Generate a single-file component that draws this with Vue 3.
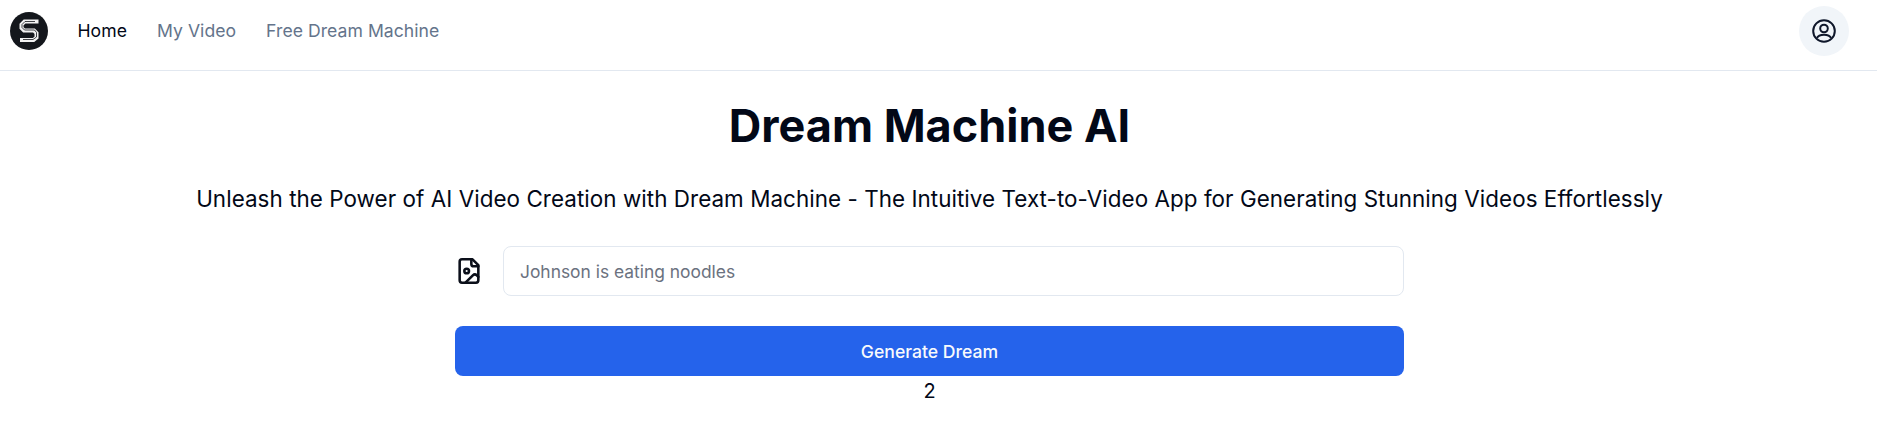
<script setup>
const links = [
  { label: 'Home', active: true },
  { label: 'My Video', active: false },
  { label: 'Free Dream Machine', active: false },
]
</script>

<template>
  <div class="page">
    <header class="topbar">
      <div class="left">
        <svg class="logo" viewBox="0 0 38 38" aria-label="logo">
          <circle cx="19" cy="19" r="19" fill="#14171c" />
          <path class="s-outer" d="M28.500 9.500H14.500L11.500 12.500V16L14 18.500H24L26.500 21V25.500L23.500 28H10" />
          <path class="s-inner" d="M25 9.500H15L12 12.500V15.500L14.500 18H24.500L26.500 20.500V25L23 27.500H13" />
        </svg>
        <nav class="nav">
          <a v-for="l in links" :key="l.label" class="link" :class="{ active: l.active }">{{ l.label }}</a>
        </nav>
      </div>
      <button class="avatar" aria-label="account">
        <svg viewBox="0 0 24 24" width="24" height="24" fill="none" stroke="#0f172a" stroke-width="2">
          <circle cx="12" cy="12" r="10.800" />
          <circle cx="12" cy="9.500" r="3.800" />
          <path d="M5 19c1-2.400 3.500-3.300 7-3.300s6 .9 7 3.300" />
        </svg>
      </button>
    </header>

    <main class="main">
      <h1 class="title">Dream Machine AI</h1>
      <p class="subtitle">Unleash the Power of AI Video Creation with Dream Machine - The Intuitive Text-to-Video App for Generating Stunning Videos Effortlessly</p>
      <div class="form">
        <div class="row">
          <svg class="file-icon" viewBox="0 0 24 24" width="28" height="28" fill="none" stroke="#0b0f1a" stroke-width="2.200" stroke-linejoin="round" stroke-linecap="round">
            <path d="M15 2H6a2 2 0 0 0-2 2v16a2 2 0 0 0 2 2h12a2 2 0 0 0 2-2V7Z" />
            <path d="M14 2v4a2 2 0 0 0 2 2h4" />
            <circle cx="10" cy="12" r="2" />
            <path d="m20 17-1.296-1.296a2.410 2.410 0 0 0-3.408 0L9 22" />
          </svg>
          <input class="input" type="text" placeholder="Johnson is eating noodles" />
        </div>
        <button class="generate">Generate Dream</button>
        <div class="count">2</div>
      </div>
    </main>
  </div>
</template>

<style>
html, body { margin: 0; background: #fff; overflow: hidden; }
</style>

<style scoped>
.page {
  width: 1859px;
  font-family: Inter, "Liberation Sans", sans-serif;
  color: #020817;
}
.topbar {
  width: 1877px;
  box-sizing: border-box;
  height: 71px;
  display: flex;
  align-items: flex-start;
  justify-content: space-between;
  padding: 6px 28px 0 10px;
  border-bottom: 1px solid #e2e8f0;
}
.left { display: flex; align-items: center; height: 50px; }
.logo { width: 38px; height: 38px; }
.s-outer { fill: none; stroke: #f2f2f2; stroke-width: 4; }
.s-inner { fill: none; stroke: #14171c; stroke-width: 0.800; }
.nav { display: flex; gap: 30px; margin-left: 29.500px; }
.link { font-size: 17.600px; line-height: 24px; font-weight: 400; letter-spacing: 0.040px; color: #64748b; }
.link.active { color: #020817; }
.avatar {
  width: 50px;
  height: 50px;
  border: 0;
  padding: 0;
  border-radius: 50%;
  background: #f1f5f9;
  display: flex;
  align-items: center;
  justify-content: center;
}
.main { display: flex; flex-direction: column; align-items: center; padding-top: 27px; }
.title { margin: 0; font-size: 45px; line-height: 56px; font-weight: 700; }
.subtitle { margin: 31px 0 0; font-size: 22.400px; line-height: 28px; font-weight: 400; letter-spacing: 0.060px; }
.form { width: 949px; margin-top: 33px; display: flex; flex-direction: column; }
.row { display: flex; align-items: center; }
.file-icon { margin-right: 20px; flex: none; }
.input {
  flex: 1;
  min-width: 0;
  height: 50px;
  box-sizing: border-box;
  border: 1px solid #e2e8f0;
  border-radius: 8px;
  padding: 0 16px;
  font: 400 17.400px Inter, sans-serif;
  outline: none;
}
.input::placeholder { color: #6b7280; opacity: 1; }
.generate {
  margin-top: 30px;
  height: 50px;
  border: 0;
  border-radius: 8px;
  background: #2563eb;
  color: #f8fafc;
  font: 500 17.600px Inter, sans-serif;
}
.count { text-align: center; font-size: 20px; line-height: 30px; }
</style>
